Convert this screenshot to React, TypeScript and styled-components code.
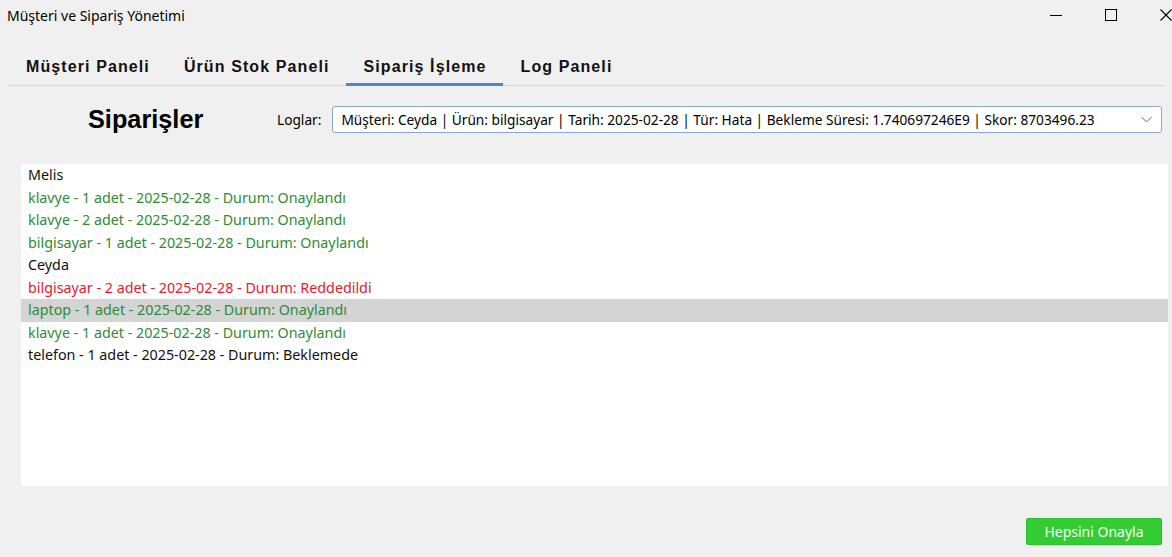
import React, { useState } from 'react';
import styled, { createGlobalStyle } from 'styled-components';

const GlobalStyle = createGlobalStyle`
    html, body {
        margin: 0;
        padding: 0;
        background: #f0f0f0;
    }
    body {
        font-family: 'Noto Sans', 'Open Sans', sans-serif;
        color: #000;
    }
`;

const Window = styled.div`
    width: 1172px;
    height: 557px;
    display: flex;
    flex-direction: column;
    background: #f0f0f0;
    overflow: hidden;
`;

const TitleBar = styled.div`
    height: 30px;
    display: flex;
    align-items: center;
    justify-content: space-between;
    padding-left: 7px;
    font-size: 14px;
`;

const WinButtons = styled.div`
    display: flex;
    align-items: center;
    height: 100%;
    gap: 43px;
`;

const WinIcon = styled.svg`
    display: block;
    flex-shrink: 0;
`;

const TabBar = styled.div`
    margin: 14px 8px 0;
    display: flex;
    border-bottom: 1px solid #d4d4d4;
    height: 41px;
`;

const Tab = styled.div<{ $active?: boolean }>`
    padding: 6px 16px 0 18px;
    display: flex;
    align-items: center;
    font-family: 'Liberation Sans', Arial, sans-serif;
    font-weight: bold;
    font-size: 16px;
    letter-spacing: 1.1px;
    color: #111;
    border-bottom: 3px solid ${(p) => (p.$active ? '#4a86c8' : 'transparent')};
    margin-bottom: -1px;
`;

const Header = styled.div`
    display: flex;
    align-items: center;
    height: 46px;
    margin-top: 10px;
    padding-left: 88px;
`;

const Title = styled.h1`
    margin: 0;
    width: 189px;
    font-family: 'Liberation Sans', Arial, sans-serif;
    font-size: 25.3px;
    font-weight: bold;
`;

const Label = styled.span`
    font-size: 13.7px;
    margin-right: 11px;
`;

const Select = styled.div`
    flex: 0 0 830px;
    height: 27px;
    box-sizing: border-box;
    border: 1px solid #86a9d6;
    border-radius: 3px;
    background: #fff;
    display: flex;
    align-items: center;
    justify-content: space-between;
    padding: 0 9px 0 8px;
    font-size: 13.7px;
`;

const OrderList = styled.ul`
    list-style: none;
    margin: 22px 4px 0 21px;
    padding: 0;
    height: 322px;
    background: #fff;
`;

const Row = styled.li<{ $color: string; $selected?: boolean }>`
    height: 22.5px;
    line-height: 22.5px;
    padding-left: 7px;
    font-size: 14.3px;
    color: ${(p) => p.$color};
    background: ${(p) => (p.$selected ? '#d4d4d4' : 'transparent')};
`;

const Footer = styled.div`
    flex: 1;
    display: flex;
    justify-content: flex-end;
    align-items: flex-start;
    padding: 32px 10px 0 0;
`;

const ApproveButton = styled.button`
    width: 136px;
    height: 27px;
    border: 1px solid #2fbf2f;
    border-radius: 2px;
    background: #33cc33;
    color: #f4fff4;
    font-family: 'Noto Sans', 'Open Sans', sans-serif;
    font-size: 14px;
    cursor: pointer;
`;

const GREEN = '#2e8b36';
const RED = '#e0202c';
const BLACK = '#111';

const rows = [
    { text: 'Melis', color: BLACK },
    { text: 'klavye - 1 adet - 2025-02-28 - Durum: Onaylandı', color: GREEN },
    { text: 'klavye - 2 adet - 2025-02-28 - Durum: Onaylandı', color: GREEN },
    { text: 'bilgisayar - 1 adet - 2025-02-28 - Durum: Onaylandı', color: GREEN },
    { text: 'Ceyda', color: BLACK },
    { text: 'bilgisayar - 2 adet - 2025-02-28 - Durum: Reddedildi', color: RED },
    { text: 'laptop - 1 adet - 2025-02-28 - Durum: Onaylandı', color: GREEN },
    { text: 'klavye - 1 adet - 2025-02-28 - Durum: Onaylandı', color: GREEN },
    { text: 'telefon - 1 adet - 2025-02-28 - Durum: Beklemede', color: BLACK },
];

const tabs = ['Müşteri Paneli', 'Ürün Stok Paneli', 'Sipariş İşleme', 'Log Paneli'];

export default function App() {
    const [selected, setSelected] = useState(6);
    return (
        <Window>
            <GlobalStyle />
            <TitleBar>
                <span>Müşteri ve Sipariş Yönetimi</span>
                <WinButtons>
                    <WinIcon width="12" height="12" viewBox="0 0 12 12">
                        <path d="M0 6.5h12" stroke="#000" strokeWidth="1" />
                    </WinIcon>
                    <WinIcon width="12" height="12" viewBox="0 0 12 12">
                        <rect x="0.5" y="0.5" width="11" height="11" fill="none" stroke="#000" />
                    </WinIcon>
                    <WinIcon width="12" height="12" viewBox="0 0 12 12">
                        <path d="M0.5 0.5L11.5 11.5M11.5 0.5L0.5 11.5" stroke="#000" strokeWidth="1.1" />
                    </WinIcon>
                </WinButtons>
            </TitleBar>
            <TabBar>
                {tabs.map((t, i) => (
                    <Tab key={t} $active={i === 2}>
                        {t}
                    </Tab>
                ))}
            </TabBar>
            <Header>
                <Title>Siparişler</Title>
                <Label>Loglar:</Label>
                <Select>
                    <span>
                        Müşteri: Ceyda | Ürün: bilgisayar | Tarih: 2025-02-28 | Tür: Hata | Bekleme Süresi:
                        1.740697246E9 | Skor: 8703496.23
                    </span>
                    <svg width="11" height="7" viewBox="0 0 11 7">
                        <path d="M0.5 1l5 5 5-5" fill="none" stroke="#666" strokeWidth="1" />
                    </svg>
                </Select>
            </Header>
            <OrderList>
                {rows.map((r, i) => (
                    <Row key={i} $color={r.color} $selected={i === selected} onClick={() => setSelected(i)}>
                        {r.text}
                    </Row>
                ))}
            </OrderList>
            <Footer>
                <ApproveButton>Hepsini Onayla</ApproveButton>
            </Footer>
        </Window>
    );
}
